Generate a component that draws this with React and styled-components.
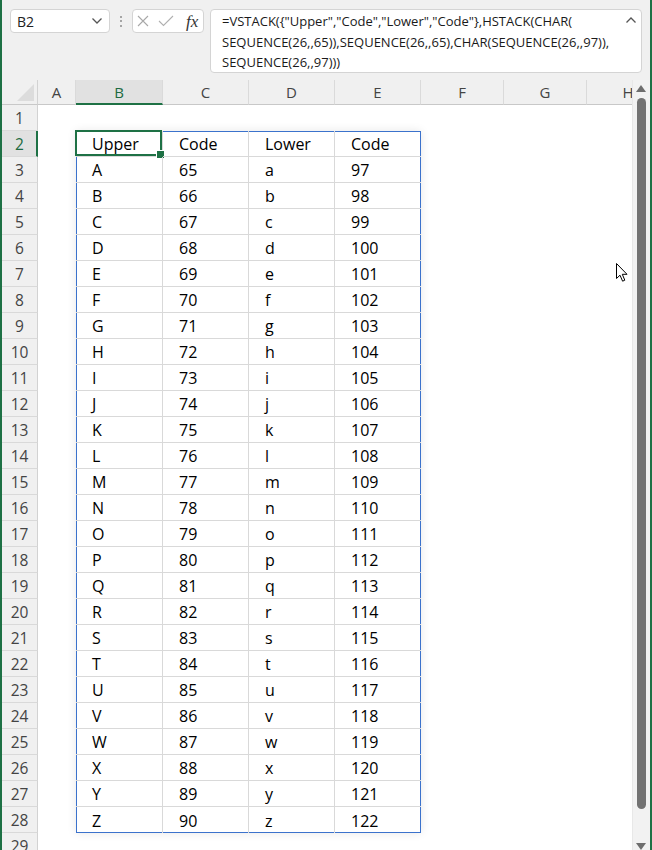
import React from "react";
import styled, { createGlobalStyle } from "styled-components";

const GREEN = "#1e7145";
const UI_FONT = `"Open Sans", "Noto Sans", "Liberation Sans", sans-serif`;

const Global = createGlobalStyle`
  html, body { margin: 0; padding: 0; background: #ffffff; }
  body { font-family: ${UI_FONT}; }
  * { box-sizing: border-box; }
`;

const Frame = styled.div`
  position: relative;
  width: 652px;
  height: 850px;
  overflow: hidden;
  background: #f0f0f0;
  border-left: 2px solid ${GREEN};
  border-right: 2px solid ${GREEN};
  display: flex;
  flex-direction: column;
`;

/* ---------- formula bar ---------- */
const FormulaBar = styled.div`
  height: 80px;
  flex: none;
  display: flex;
  align-items: flex-start;
  padding: 9px 8px 0 8px;
`;

const NameBox = styled.div`
  width: 100px;
  height: 24px;
  background: #fff;
  border: 1px solid #d4d4d4;
  border-radius: 4px;
  display: flex;
  align-items: center;
  justify-content: space-between;
  padding: 0 6px 0 6px;
  font-size: 14px;
  color: #222;
`;

const Dots = styled.div`
  width: 22px;
  height: 24px;
  display: flex;
  flex-direction: column;
  align-items: center;
  justify-content: center;
  gap: 2.5px;
  & > span {
    width: 2px;
    height: 2px;
    border-radius: 1px;
    background: #8c8c8c;
  }
`;

const FxBox = styled.div`
  width: 72px;
  height: 24px;
  background: #fff;
  border: 1px solid #d4d4d4;
  border-radius: 4px;
  display: flex;
  align-items: center;
  padding-left: 4px;
`;

const FxGlyph = styled.span`
  font-family: "Liberation Serif", "DejaVu Serif", serif;
  font-style: italic;
  font-size: 17px;
  color: #333;
  margin-left: 12px;
  line-height: 1;
`;

const FormulaBox = styled.div`
  position: relative;
  flex: 1;
  margin-left: 6px;
  height: 64px;
  background: #fff;
  border: 1px solid #d4d4d4;
  border-radius: 4px;
  padding: 1px 30px 0 11px;
  font-size: 13px;
  line-height: 20.5px;
  color: #1a1a1a;
  white-space: nowrap;
`;

const FormulaLine = styled.div``;

const CollapseCaret = styled.svg`
  position: absolute;
  right: 4px;
  top: 6px;
`;

/* ---------- sheet ---------- */
const SheetArea = styled.div`
  flex: 1;
  display: flex;
  min-height: 0;
`;

const Grid = styled.div`
  flex: 1;
  min-width: 0;
  overflow: hidden;
  background: #fff;
  display: grid;
  grid-template-columns: 36px 38px 87px 86px 86px 86px 83px 83px 83px;
  grid-template-rows: 25px repeat(29, 26px);
  font-family: ${UI_FONT};
`;

const Corner = styled.div`
  grid-column: 1;
  grid-row: 1;
  background: #f0f0f0;
  border-right: 1px solid #d2d2d2;
  border-bottom: 1px solid #c8c8c8;
  display: flex;
  align-items: flex-end;
  justify-content: flex-end;
  padding: 0 3px 3px 0;
`;

const ColHeader = styled.div`
  grid-row: 1;
  background: ${(p) => (p.$active ? "#e1e1e1" : "#f0f0f0")};
  border-right: 1px solid #dadada;
  border-bottom: ${(p) => (p.$active ? `2px solid ${GREEN}` : "1px solid #c8c8c8")};
  color: ${(p) => (p.$active ? "#1d6a40" : "#444")};
  font-size: 15px;
  display: flex;
  align-items: center;
  justify-content: center;
  padding-top: ${(p) => (p.$active ? "1px" : "0")};
`;

const RowHeader = styled.div`
  grid-column: 1;
  background: ${(p) => (p.$active ? "#e1e1e1" : "#f0f0f0")};
  border-right: ${(p) => (p.$active ? `2px solid ${GREEN}` : "1px solid #d2d2d2")};
  border-bottom: 1px solid #d9d9d9;
  color: ${(p) => (p.$active ? "#1d6a40" : "#444")};
  font-size: 15.5px;
  display: flex;
  align-items: center;
  justify-content: center;
  padding-left: ${(p) => (p.$active ? "1px" : "0")};
`;

const Table = styled.div`
  grid-column: 3 / span 4;
  grid-row: 3 / span 27;
  display: grid;
  grid-template-columns: 87px 86px 86px 86px;
  grid-template-rows: repeat(27, 26px);
  outline: 1px solid #3b72cc;
  outline-offset: -1px;
  box-shadow: 0 0 9px rgba(0, 0, 0, 0.1);
  background: #fff;
`;

const Cell = styled.div`
  position: relative;
  border-right: ${(p) => (p.$lastCol ? "none" : "1px solid #d9d9d9")};
  border-bottom: ${(p) => (p.$lastRow ? "none" : "1px solid #d9d9d9")};
  display: flex;
  align-items: center;
  padding: 1px 0 0 16px;
  font-size: 16px;
  color: #000;
  white-space: nowrap;
`;

const Selection = styled.div`
  position: absolute;
  left: -1px;
  top: -1px;
  right: 0;
  bottom: 0;
  border: 2px solid ${GREEN};
  pointer-events: none;
  &::after {
    content: "";
    position: absolute;
    right: -5px;
    bottom: -5px;
    width: 7px;
    height: 7px;
    background: ${GREEN};
    border: 1px solid #fff;
  }
`;

/* ---------- scrollbar ---------- */
const ScrollBar = styled.div`
  width: 18px;
  flex: none;
  background: #f2f2f2;
  border-left: 1px solid #e8e8e8;
  display: flex;
  flex-direction: column;
  align-items: center;
  padding: 5px 1px 0 0;
`;

const Thumb = styled.div`
  width: 9px;
  height: 711px;
  margin-top: 6px;
  border-radius: 5px;
  background: #737373;
`;

const ArrowDown = styled.svg`
  margin-top: 34px;
`;

const Pointer = styled.svg`
  position: absolute;
  left: 613px;
  top: 262px;
`;

const COLS = ["A", "B", "C", "D", "E", "F", "G", "H"];

const rows = [["Upper", "Code", "Lower", "Code"]];
for (let i = 0; i < 26; i++) {
  rows.push([
    String.fromCharCode(65 + i),
    String(65 + i),
    String.fromCharCode(97 + i),
    String(97 + i),
  ]);
}

export default function App() {
  return (
    <>
      <Global />
      <Frame>
        <FormulaBar>
          <NameBox>
            <span>B2</span>
            <svg width="12" height="8" viewBox="0 0 12 8">
              <path d="M1.5 1.5 L6 6 L10.5 1.5" fill="none" stroke="#555" strokeWidth="1.3" />
            </svg>
          </NameBox>
          <Dots>
            <span />
            <span />
            <span />
          </Dots>
          <FxBox>
            <svg width="12" height="12" viewBox="0 0 12 12">
              <path d="M1 1 L11 11 M11 1 L1 11" stroke="#a8a8a8" strokeWidth="1.1" />
            </svg>
            <svg width="16" height="12" viewBox="0 0 16 12" style={{ marginLeft: 9 }}>
              <path d="M1 6 L5.5 10.5 L15 1" fill="none" stroke="#b0b0b0" strokeWidth="1.1" />
            </svg>
            <FxGlyph>fx</FxGlyph>
          </FxBox>
          <FormulaBox>
            <FormulaLine>{'=VSTACK({"Upper","Code","Lower","Code"},HSTACK(CHAR('}</FormulaLine>
            <FormulaLine>{"SEQUENCE(26,,65)),SEQUENCE(26,,65),CHAR(SEQUENCE(26,,97)),"}</FormulaLine>
            <FormulaLine>{"SEQUENCE(26,,97)))"}</FormulaLine>
            <CollapseCaret width="12" height="8" viewBox="0 0 12 8">
              <path d="M1.5 6.5 L6 2 L10.5 6.5" fill="none" stroke="#555" strokeWidth="1.3" />
            </CollapseCaret>
          </FormulaBox>
        </FormulaBar>

        <SheetArea>
          <Grid>
            <Corner>
              <svg width="17" height="17" viewBox="0 0 17 17">
                <polygon points="0,17 17,0 17,17" fill="#dcdcdc" />
              </svg>
            </Corner>
            {COLS.map((c, i) => (
              <ColHeader key={c} $active={c === "B"} style={{ gridColumn: i + 2 }}>
                {c}
              </ColHeader>
            ))}
            {Array.from({ length: 29 }, (_, i) => (
              <RowHeader key={i} $active={i === 1} style={{ gridRow: i + 2 }}>
                {i + 1}
              </RowHeader>
            ))}
            <Table>
              {rows.map((r, ri) =>
                r.map((v, ci) => (
                  <Cell key={`${ri}-${ci}`} $lastCol={ci === 3} $lastRow={ri === rows.length - 1}>
                    {v}
                    {ri === 0 && ci === 0 && <Selection />}
                  </Cell>
                ))
              )}
            </Table>
          </Grid>
          <ScrollBar>
            <svg width="10" height="7" viewBox="0 0 10 7">
              <polygon points="5,0 10,7 0,7" fill="#6e6e6e" />
            </svg>
            <Thumb />
            <ArrowDown width="10" height="7" viewBox="0 0 10 7">
              <polygon points="0,0 10,0 5,7" fill="#6e6e6e" />
            </ArrowDown>
          </ScrollBar>
        </SheetArea>

        <Pointer width="14" height="21" viewBox="0 0 14 21">
          <path
            d="M1.5 1.5 L1.5 16.5 L5 13.2 L7.6 19.2 L9.8 18.2 L7.3 12.3 L12 12.3 Z"
            fill="#fff"
            stroke="#000"
            strokeWidth="1"
            strokeLinejoin="round"
          />
        </Pointer>
      </Frame>
    </>
  );
}
